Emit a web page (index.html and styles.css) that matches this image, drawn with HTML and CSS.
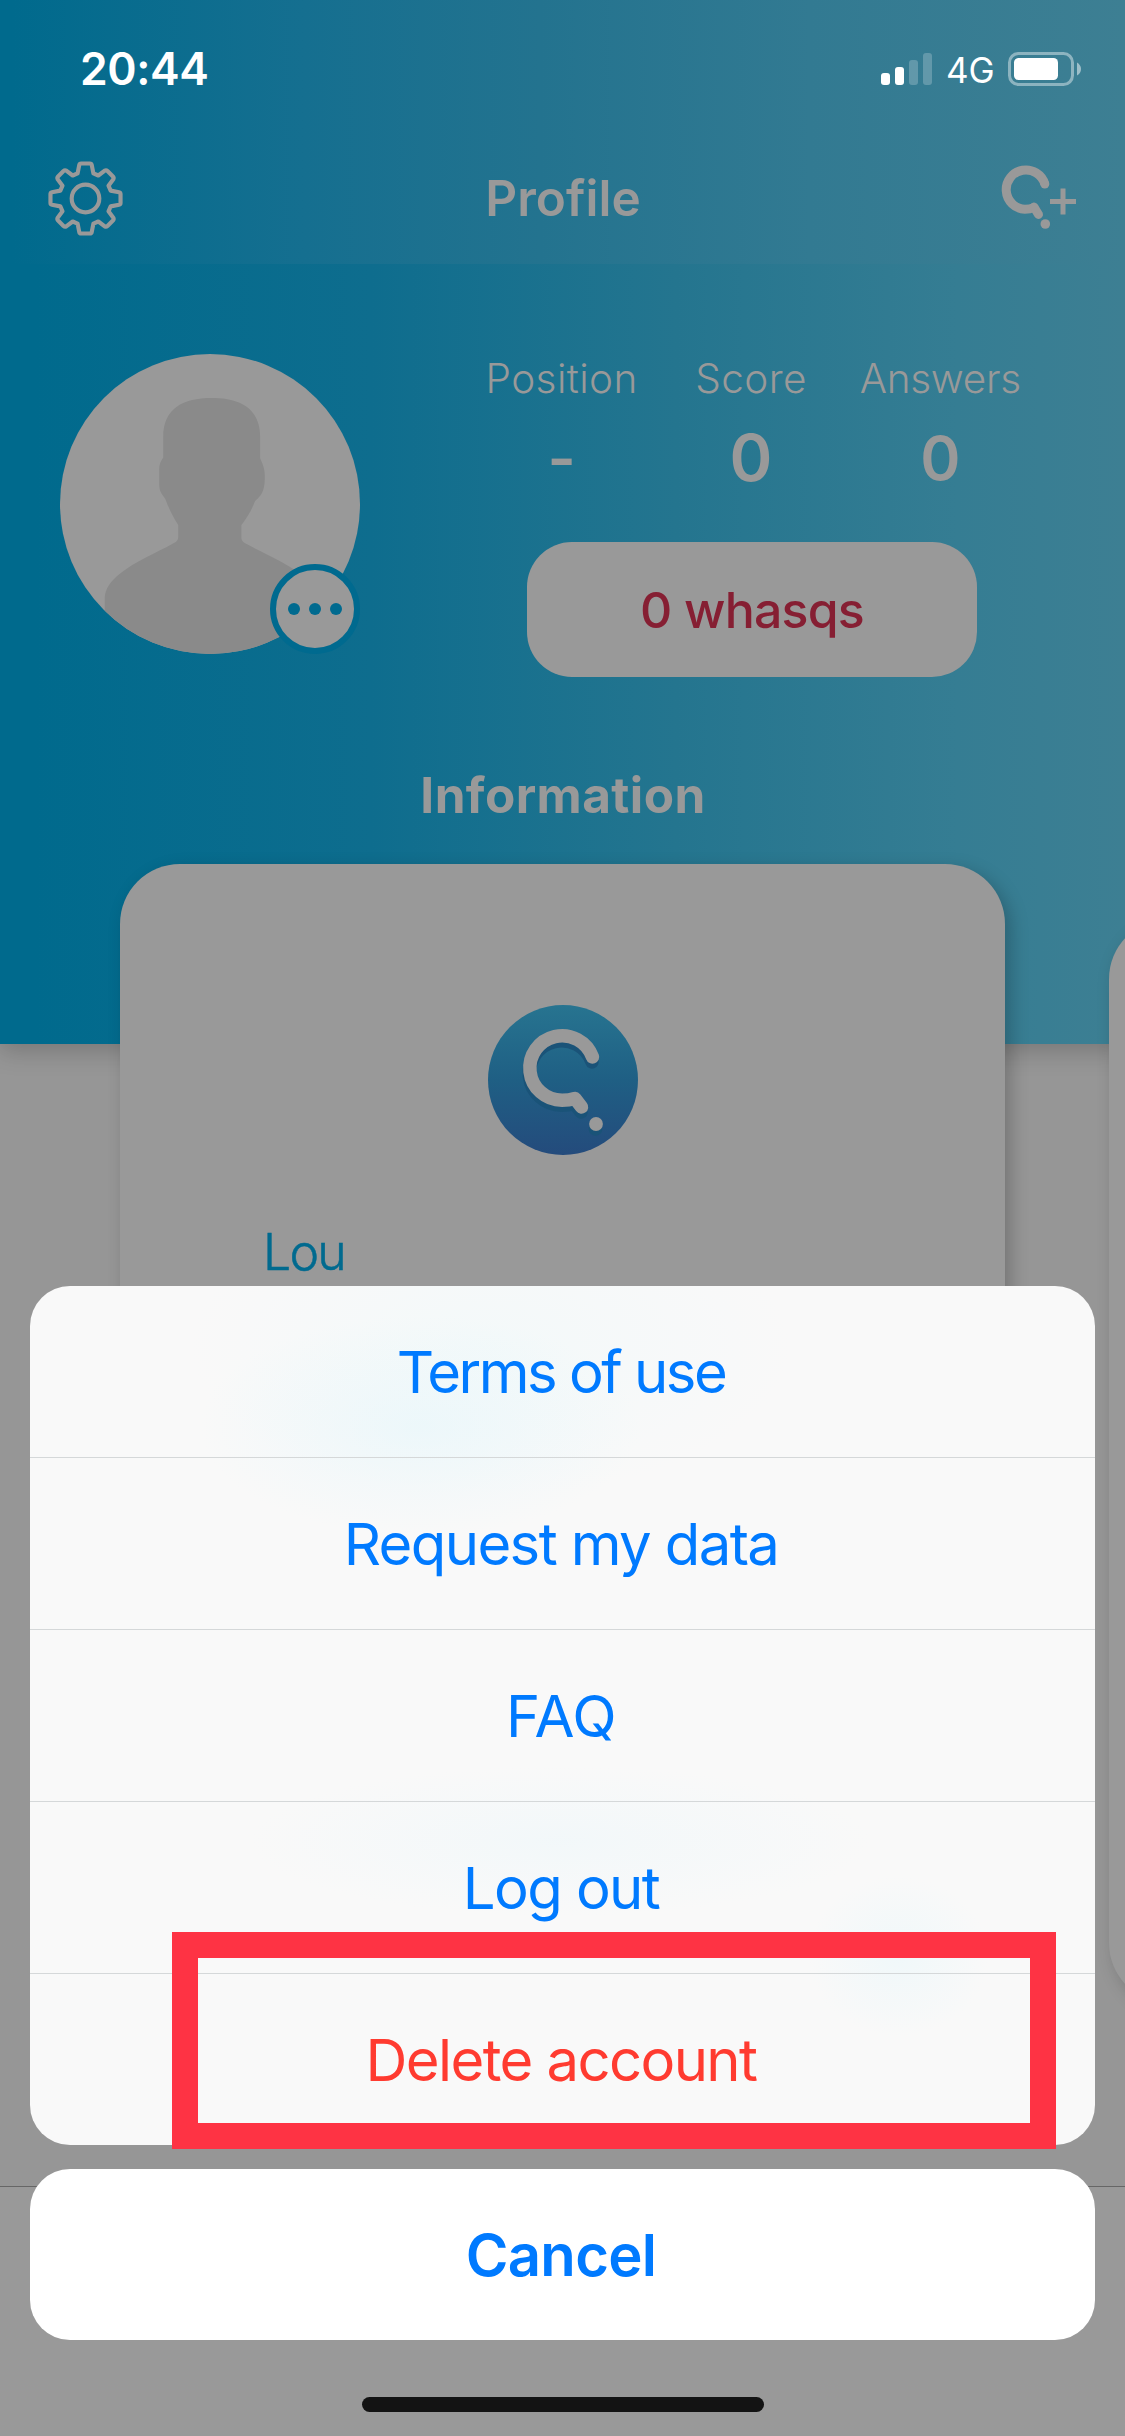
FILE: index.html
```html
<!DOCTYPE html>
<html lang="en">
<head>
<meta charset="utf-8">
<title>Profile</title>
<link rel="stylesheet" href="styles.css">
</head>
<body>
<div class="phone">
  <header class="top">
    <div class="status">
      <span class="clock">20:44</span>
      <div class="indicators">
        <svg class="signal" width="51" height="32" viewBox="0 0 51 32" fill="#fff">
          <rect x="0" y="20" width="9" height="12" rx="3"/>
          <rect x="14" y="14" width="9" height="18" rx="3"/>
          <rect x="28" y="7" width="9" height="25" rx="3" opacity=".22"/>
          <rect x="42" y="0" width="9" height="32" rx="3" opacity=".22"/>
        </svg>
        <span class="network">4G</span>
        <svg class="battery" width="74" height="34" viewBox="0 0 74 34">
          <rect x="1.5" y="1.5" width="63" height="31" rx="9" fill="none" stroke="#fff" stroke-opacity=".42" stroke-width="3"/>
          <rect x="6" y="6" width="44" height="22" rx="4.5" fill="#fff"/>
          <path d="M69 10.500Q73 13 73 17T69 23.500Z" fill="#fff" fill-opacity=".5"/>
        </svg>
      </div>
    </div>
    <nav class="navbar">
      <svg class="gear" width="75" height="75" viewBox="-38 -38 76 76" fill="none" stroke="#999" stroke-width="4.200" stroke-linejoin="round">
        <circle r="14"/>
        <path d="M-4.500 -35.500H4.500Q6 -35.500 6.300 -34L8 -25.500L13 -23.300L19.500 -28.200Q21 -29 22.300 -27.800L27.800 -22.300Q29 -21 28.200 -19.500L23.300 -13L25.500 -8L34 -6.300Q35.500 -6 35.500 -4.500V4.500Q35.500 6 34 6.300L25.500 8L23.300 13L28.200 19.500Q29 21 27.800 22.300L22.300 27.800Q21 29 19.500 28.200L13 23.300L8 25.500L6.300 34Q6 35.500 4.500 35.500H-4.500Q-6 35.500 -6.300 34L-8 25.500L-13 23.300L-19.500 28.200Q-21 29 -22.300 27.800L-27.800 22.300Q-29 21 -28.200 19.500L-23.300 13L-25.500 8L-34 6.300Q-35.500 6 -35.500 4.500V-4.500Q-35.500 -6 -34 -6.300L-25.500 -8L-23.300 -13L-28.200 -19.500Q-29 -21 -27.800 -22.300L-22.300 -27.800Q-21 -29 -19.500 -28.200L-13 -23.300L-8 -25.500L-6.300 -34Q-6 -35.500 -4.500 -35.500Z"/>
      </svg>
      <h1 class="title">Profile</h1>
      <svg class="add" width="76" height="64" viewBox="0 0 76 64" fill="none" stroke="#999" stroke-width="9">
        <path d="M43.800 19A19.700 19.700 0 1 0 24 44.300Q29 44.300 33 42.500"/>
        <circle cx="43.800" cy="19" r="4.500" fill="#999" stroke="none"/>
        <path d="M33 42L37.500 49.500" stroke-linecap="round"/>
        <circle cx="44.300" cy="59" r="4.800" fill="#999" stroke="none"/>
        <path d="M49 36.500H75M62 23.500V49.500" stroke-width="5"/>
      </svg>
    </nav>
  </header>

  <main class="profile">
    <section class="summary">
      <div class="avatar">
        <svg width="300" height="300" viewBox="61 42 898 898">
          <defs><clipPath id="round"><circle cx="510" cy="491" r="449"/></clipPath></defs>
          <circle cx="510" cy="491" r="449" fill="#999"/>
          <path clip-path="url(#round)" fill="#8a8a8a" d="M515 174C600 174 660 205 660 290V354C668 372 674 385 674 405C674 440 672 460 645 482C636 505 628 522 604 554V592Q604 602 614 608C680 644 735 665 775 697C815 725 830 750 830 780V960H195V770C197 745 210 725 240 700C285 664 345 640 402 608Q415 602 415 590V554C398 527 387 505 376 475C362 458 358 450 358 430V390C358 372 362 365 370 352V290C370 205 430 174 515 174Z"/>
        </svg>
        <span class="more"><i></i><i></i><i></i></span>
      </div>
      <div class="figures">
        <dl class="stats">
          <div class="stat"><dt>Position</dt><dd>-</dd></div>
          <div class="stat"><dt>Score</dt><dd class="main">0</dd></div>
          <div class="stat"><dt class="snug">Answers</dt><dd>0</dd></div>
        </dl>
        <button class="whasqs">0 whasqs</button>
      </div>
    </section>
    <h2 class="section-title">Information</h2>
    <div class="cards">
      <article class="card">
        <svg class="logo" width="150" height="150" viewBox="0 0 150 150">
          <defs><linearGradient id="sea" x1="0" y1="0" x2="0" y2="1"><stop offset="0" stop-color="#277490"/><stop offset=".5" stop-color="#1f5f84"/><stop offset="1" stop-color="#244b7c"/></linearGradient></defs>
          <circle cx="75" cy="75" r="75" fill="url(#sea)"/>
          <g transform="translate(-.5 5)" stroke="#1a5378" fill="none" stroke-width="13.500" stroke-linecap="round" stroke-linejoin="round">
            <path d="M104.500 52A32.300 32.300 0 1 0 74 95.300Q81 95.300 87 93.500L93.500 102"/><circle cx="108" cy="119" r="6.800" fill="#1a5378" stroke="none"/>
          </g>
          <g stroke="#999" fill="none" stroke-width="13.500" stroke-linecap="round" stroke-linejoin="round">
            <path d="M104.500 52A32.300 32.300 0 1 0 74 95.300Q81 95.300 87 93.500L93.500 102"/><circle cx="108" cy="119" r="6.900" fill="#999" stroke="none"/>
          </g>
        </svg>
        <p class="name">Lou</p>
      </article>
      <article class="card next"></article>
    </div>
  </main>
  <div class="tabbar"></div>

  <div class="sheet">
    <div class="actions">
      <button class="action tight">Terms of use</button>
      <button class="action">Request my data</button>
      <button class="action loose">FAQ</button>
      <button class="action">Log out</button>
      <button class="action danger">Delete account</button>
      <div class="highlight"></div>
    </div>
    <button class="action cancel">Cancel</button>
    <div class="home"></div>
  </div>
</div>
</body>
</html>
```
FILE: styles.css
```css
* { box-sizing: border-box; margin: 0; padding: 0; }
body { font-family: Inter, "Liberation Sans", sans-serif; background: #969696; }
button { font: inherit; border: 0; display: block; }
.phone { position: relative; width: 1125px; height: 2436px; overflow: hidden; background: #969696; display: flex; flex-direction: column; }

.top { position: relative; z-index: 1; height: 264px; background: linear-gradient(90deg, #006a8d 1%, #156f90 27%, #23738f 48%, #327a92 72%, #3d7f93); }
.status { height: 132px; padding: 0 43px 0 80px; display: flex; justify-content: space-between; }
.clock { font-size: 44.500px; font-weight: 600; line-height: 138px; color: #fff; letter-spacing: -.4px; }
.indicators { display: flex; align-items: flex-start; padding-top: 52px; width: 201px; }
.signal { margin-top: 1px; flex: none; }
.network { color: #fff; font-size: 35px; line-height: 37px; width: 77px; padding-left: 14px; font-weight: 400; }
.battery { margin-left: 0; flex: none; }
.navbar { height: 132px; padding: 0 47px 0 48px; display: flex; justify-content: space-between; align-items: center; }
.title { width: 170px; text-align: center; font-size: 49.500px; font-weight: 600; color: #999; padding-left: 2px; }
.add { margin: 0 1px 2px 0; }

.profile { height: 780px; background: linear-gradient(90deg, #006a8d 3%, #0e6d8e 33%, #24758f 60%, #357d93 85%, #3d7f93); box-shadow: 0 6px 24px rgba(0,0,0,.22); }
.summary { display: flex; padding: 90px 89px 0 60px; justify-content: space-between; height: 480px; }
.avatar { position: relative; width: 300px; height: 300px; }
.avatar svg { display: block; }
.more { position: absolute; left: 210px; top: 210px; width: 90px; height: 90px; border-radius: 50%; border: 6px solid #006a8f; background: #999; display: flex; align-items: center; justify-content: center; gap: 8.500px; }
.more i { width: 12.500px; height: 12.500px; border-radius: 50%; background: #006a8f; }
.figures { width: 568px; display: flex; flex-direction: column; align-items: center; }
.stats { display: flex; width: 568px; height: 188px; color: #999; text-align: center; margin-left: -2px; }
.stat { flex: 1; }
.stat dt { font-size: 40.500px; font-weight: 300; line-height: 49px; letter-spacing: .4px; }
.stat .snug { letter-spacing: -.3px; }
.stat dd { font-size: 61px; font-weight: 600; line-height: 62px; margin-top: 24px; }
.stat .main { font-size: 65px; }
.whasqs { width: 450px; height: 135px; border-radius: 45px; background: #999; color: #861f33; font-size: 50px; font-weight: 500; letter-spacing: -.8px; }
.section-title { text-align: center; color: #999; font-size: 49.500px; font-weight: 700; line-height: 60px; margin-top: 21px; letter-spacing: .4px; padding-left: 1px; }
.cards { display: flex; gap: 104px; padding: 39px 0 0 120px; align-items: flex-start; }
.card { flex: none; width: 885px; height: 1200px; border-radius: 60px; background: #999; box-shadow: 6px 6px 18px rgba(0,0,0,.22); padding-top: 141px; }
.next { height: 1084px; margin-top: 55px; }
.logo { display: block; margin: 0 auto; }
.name { color: #006a8f; font-size: 50px; font-weight: 300; line-height: 60px; padding: 67px 0 0 143px; letter-spacing: -1.800px; -webkit-text-stroke: .5px #006a8f; }
.tabbar { margin-top: auto; height: 250px; border-top: 1px solid #666; background: #999; }

.sheet { position: absolute; left: 30px; right: 30px; bottom: 24px; display: flex; flex-direction: column; align-items: center; }
.actions { position: relative; width: 100%; border-radius: 40px; display: flex; flex-direction: column; gap: 1px;
  background:
    radial-gradient(ellipse 220px 110px at 390px 140px, rgba(228,246,251,.55), rgba(240,248,250,0)),
    radial-gradient(ellipse 300px 150px at 460px 60px, rgba(238,249,250,.5), rgba(244,249,250,0)),
    radial-gradient(ellipse 310px 75px at 530px 555px, rgba(238,247,250,.6), rgba(244,248,250,0)),
    radial-gradient(ellipse 90px 80px at 868px 670px, rgba(234,247,250,.6), rgba(244,248,250,0)),
    #f9f9f9; }
.action { width: 100%; height: 171px; padding-right: 3px; color: #007aff; font-size: 58px; background: none; text-align: center; letter-spacing: -1.600px; }
.action + .action { box-shadow: 0 -1px #d5d8d9; }
.tight { letter-spacing: -2.500px; }
.loose { letter-spacing: -.4px; }
.danger { color: #ff3b30; }
.cancel { margin-top: 24px; background: #fff; border-radius: 40px; font-weight: 600; letter-spacing: -.7px; }
.highlight { position: absolute; left: 142px; top: 646px; width: 884px; height: 217px; border: 26px solid #fe3344; }
.home { width: 402px; height: 15px; border-radius: 8px; background: #131313; margin-top: 57px; }
```
